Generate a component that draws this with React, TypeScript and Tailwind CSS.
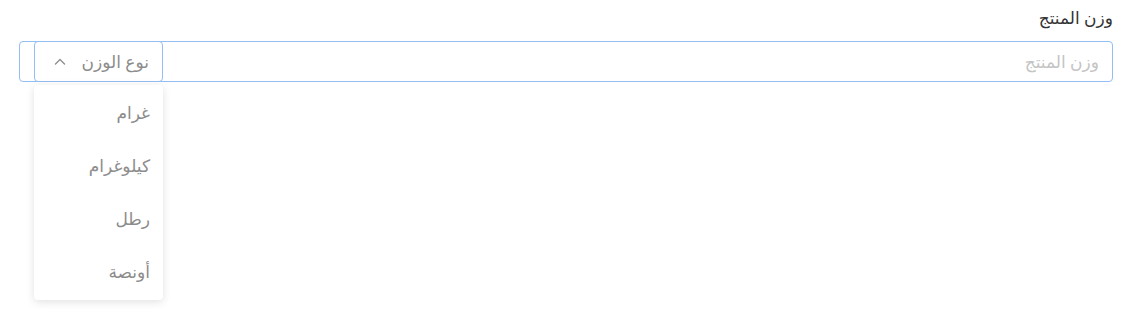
import React from "react";

const units = ["غرام", "كيلوغرام", "رطل", "أونصة"];

const App: React.FC = () => {
  return (
    <div
      dir="rtl"
      className="w-[1132px] h-[309px] bg-white px-[19px] pt-[4px] font-['Noto_Sans','DejaVu_Sans',sans-serif]"
    >
      {/* Label */}
      <label className="block h-[37px] text-[17px] leading-[28px] text-[#333333]">
        وزن المنتج
      </label>

      {/* Field */}
      <div className="relative flex items-stretch h-[41px] border border-[#93bdf4] rounded-[4px]">
        <input
          placeholder="وزن المنتج"
          className="flex-1 bg-transparent pr-[13px] text-[17px] text-[#333] placeholder:text-[#c4c4c4] outline-none"
        />
        <div className="relative ml-[14px] -my-px">
          <button className="flex items-center justify-between w-[129px] h-[41px] pr-[13px] pl-[19px] border border-[#93bdf4] rounded-[4px] bg-white text-[17px] text-[#8c8c8c]">
            <span>نوع الوزن</span>
            <svg width="12" height="12" viewBox="0 0 12 12" fill="none" className="text-[#8c8c8c]">
              <path d="M1.5 8 L6 3.5 L10.5 8" stroke="currentColor" strokeWidth="1.3" strokeLinecap="round" strokeLinejoin="round" />
            </svg>
          </button>

          {/* Menu */}
          <ul className="absolute top-[44px] right-0 w-[129px] h-[215px] bg-white rounded-[4px] shadow-[0_2px_8px_rgba(0,0,0,0.12)] py-[1px]">
            {units.map((u) => (
              <li
                key={u}
                className="flex items-center h-[53px] px-[13px] text-[17px] text-[#8c8c8c] cursor-pointer hover:bg-gray-50"
              >
                {u}
              </li>
            ))}
          </ul>
        </div>
      </div>
    </div>
  );
};

export default App;
